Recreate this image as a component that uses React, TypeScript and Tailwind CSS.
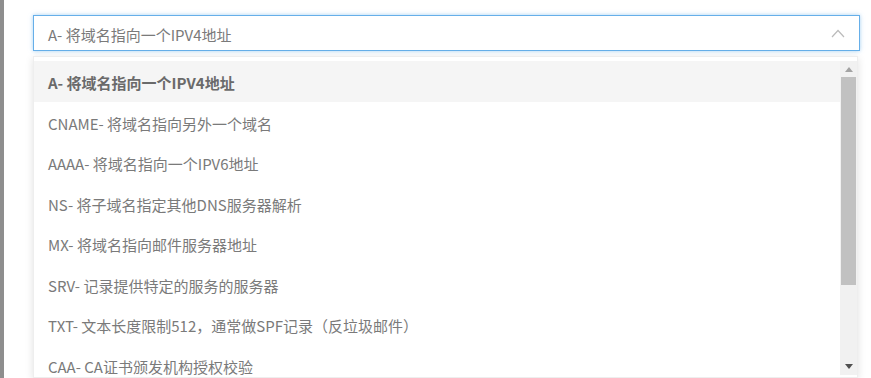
import React from "react";

const items = [
  "A- 将域名指向一个IPV4地址",
  "CNAME- 将域名指向另外一个域名",
  "AAAA- 将域名指向一个IPV6地址",
  "NS- 将子域名指定其他DNS服务器解析",
  "MX- 将域名指向邮件服务器地址",
  "SRV- 记录提供特定的服务的服务器",
  "TXT- 文本长度限制512，通常做SPF记录（反垃圾邮件）",
  "CAA- CA证书颁发机构授权校验",
];

export default function App() {
  return (
    <div
      className="flex h-[378px] w-[871px] overflow-hidden bg-white"
      style={{ fontFamily: '"Noto Sans CJK SC", "Microsoft YaHei", sans-serif' }}
    >
      <div className="h-full w-[4px] shrink-0 bg-[#8e8e8e]" />
      <div className="flex flex-col pl-[29px] pt-[15px]">
        <div className="flex h-[42px] w-[827px] items-center justify-between border border-[#66afe9] bg-white pl-[14px] pr-[14px] shadow-[0_0_4px_rgba(102,175,233,0.6)]">
          <span className="pt-[5px] text-[15px] text-[#7a7a7a]">A- 将域名指向一个IPV4地址</span>
          <svg width="14" height="9" viewBox="0 0 14 9" fill="none">
            <path d="M1 8 L7 1.5 L13 8" stroke="#bbb" strokeWidth="1.2" />
          </svg>
        </div>
        <div className="mt-[5px] flex h-[322px] w-[825px] border border-[#eee] bg-white pt-[4px] pb-[2px] shadow-[0_2px_8px_rgba(0,0,0,0.12)]">
          <div className="flex flex-1 flex-col overflow-hidden">
            {items.map((t, i) => (
              <div
                key={i}
                className={
                  i === 0
                    ? "flex h-[40.5px] shrink-0 items-center bg-[#f5f5f5] pl-[14px] pt-[4px] text-[15px] font-bold text-[#6a6a6a]"
                    : "flex h-[40.5px] shrink-0 items-center pl-[14px] pt-[4px] text-[15px] text-[#7a7a7a]"
                }
              >
                {t}
              </div>
            ))}
          </div>
          <div className="flex w-[17px] shrink-0 flex-col bg-[#f1f1f1]">
            <div className="flex h-[16px] items-center justify-center">
              <svg width="8" height="5" viewBox="0 0 8 5">
                <path d="M0 5 L4 0 L8 5 Z" fill="#a3a3a3" />
              </svg>
            </div>
            <div className="mx-[1px] h-[208px] bg-[#c1c1c1]" />
            <div className="flex-1" />
            <div className="flex h-[17px] items-center justify-center">
              <svg width="8" height="5" viewBox="0 0 8 5">
                <path d="M0 0 L8 0 L4 5 Z" fill="#505050" />
              </svg>
            </div>
          </div>
        </div>
      </div>
    </div>
  );
}
